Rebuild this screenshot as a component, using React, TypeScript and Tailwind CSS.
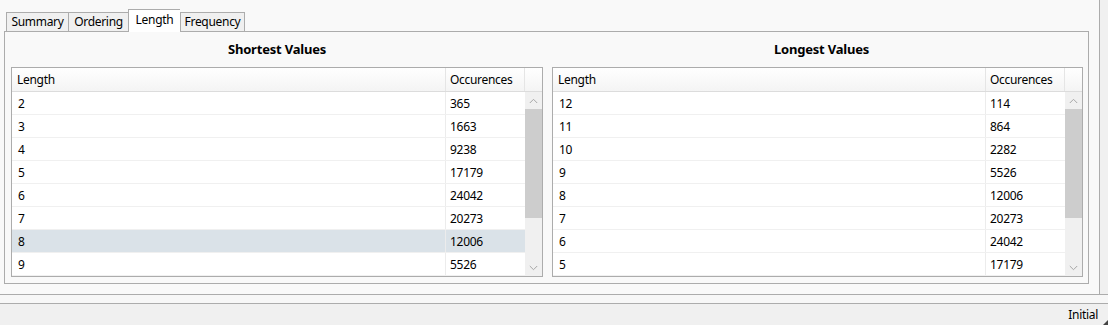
import React from "react";

const shortest: [number, number][] = [
  [2, 365],
  [3, 1663],
  [4, 9238],
  [5, 17179],
  [6, 24042],
  [7, 20273],
  [8, 12006],
  [9, 5526],
];
const longest: [number, number][] = [
  [12, 114],
  [11, 864],
  [10, 2282],
  [9, 5526],
  [8, 12006],
  [7, 20273],
  [6, 24042],
  [5, 17179],
];

function Chevron({ up }: { up: boolean }) {
  return (
    <svg width="9" height="6" viewBox="0 0 9 6">
      <path
        d={up ? "M0.8 5 L4.5 1.3 L8.2 5" : "M0.8 1 L4.5 4.7 L8.2 1"}
        fill="none"
        stroke="#a6a6a6"
        strokeWidth="1"
      />
    </svg>
  );
}

function Table({ rows, selected, width }: { rows: [number, number][]; selected?: number; width: string }) {
  return (
    <div className={`${width} h-[210px] border border-[#acacac] bg-white flex flex-col`}>
      <div className="flex h-[24px] border-b border-[#dcdcdc] bg-gradient-to-b from-white to-[#f4f4f4]">
        <div className="flex-1 border-r border-[#e5e5e5] pl-[5px] pt-[1px] flex items-center">Length</div>
        <div className="w-[79px] border-r border-[#e5e5e5] pl-[4px] pt-[1px] flex items-center">Occurences</div>
        <div className="w-[17px]" />
      </div>
      <div className="flex flex-1">
        <div className="flex-1 flex flex-col">
          {rows.map(([a, b], i) => (
            <div
              key={i}
              className={`flex h-[23px] border-b border-[#f0f0f0] ${i === selected ? "bg-[#dae2e8]" : ""}`}
            >
              <div className="flex-1 border-r border-[#ececec] pl-[6px] pt-[1px] flex items-center">{a}</div>
              <div className="w-[79px] pl-[4px] pt-[1px] flex items-center">{b}</div>
            </div>
          ))}
        </div>
        <div className="w-[17px] bg-[#f0f0f0] flex flex-col">
          <div className="h-[17px] flex items-center justify-center">
            <Chevron up />
          </div>
          <div className="h-[109px] bg-[#cdcdcd]" />
          <div className="flex-1" />
          <div className="h-[17px] flex items-center justify-center">
            <Chevron up={false} />
          </div>
        </div>
      </div>
    </div>
  );
}

export default function App() {
  const tabs = [
    { label: "Summary", w: "w-[62px]" },
    { label: "Ordering", w: "w-[60px]" },
    { label: "Length", w: "w-[52px]", active: true },
    { label: "Frequency", w: "w-[65px]", last: true },
  ];
  return (
    <div
      className="w-[1108px] h-[325px] bg-[#f0f0f0] flex flex-col overflow-hidden text-[12px] tracking-[-0.3px] text-black"
      style={{ fontFamily: '"Noto Sans", "Open Sans", sans-serif' }}
    >
      <div className="h-[294px] flex">
        <div className="w-[1100px] h-full bg-[#f9f9f9] border-r border-[#acacac] pl-[4px] pt-[9px] flex flex-col">
          <div className="h-[22px] flex items-end pl-[2px]">
            {tabs.map((t) => (
              <div
                key={t.label}
                className={
                  t.active
                    ? `${t.w} h-[23px] -mb-px relative z-10 bg-white border-l border-t border-[#acacac] flex items-center justify-center pb-[2px]`
                    : `${t.w} h-[19px] bg-[#f0f0f0] border-l border-t border-[#acacac] flex items-center justify-center ${t.last ? "border-r" : ""}`
                }
              >
                {t.label}
              </div>
            ))}
          </div>
          <div className="w-[1085px] h-[253px] border border-[#acacac] bg-[#f9f9f9] flex pl-[6px] gap-[9px]">
            <div className="flex flex-col">
              <div className="h-[35px] flex items-center justify-center font-bold text-[13px] tracking-[-0.2px]">Shortest Values</div>
              <Table rows={shortest} selected={6} width="w-[532px]" />
            </div>
            <div className="flex flex-col">
              <div className="h-[35px] flex items-center justify-center font-bold text-[13px] tracking-[-0.2px] pl-[8px]">Longest Values</div>
              <Table rows={longest} width="w-[531px]" />
            </div>
          </div>
        </div>
        <div className="flex-1" />
      </div>
      <div className="h-[10px] border-t border-b border-[#acacac] bg-[#f7f7f7]" />
      <div className="flex-1 flex items-center justify-end pr-[10px] relative">
        <span>Initial</span>
        <svg className="absolute right-0 bottom-0" width="5" height="5" viewBox="0 0 5 5">
          <path d="M5 0 L5 5 L0 5 Z" fill="#444" />
        </svg>
      </div>
    </div>
  );
}
